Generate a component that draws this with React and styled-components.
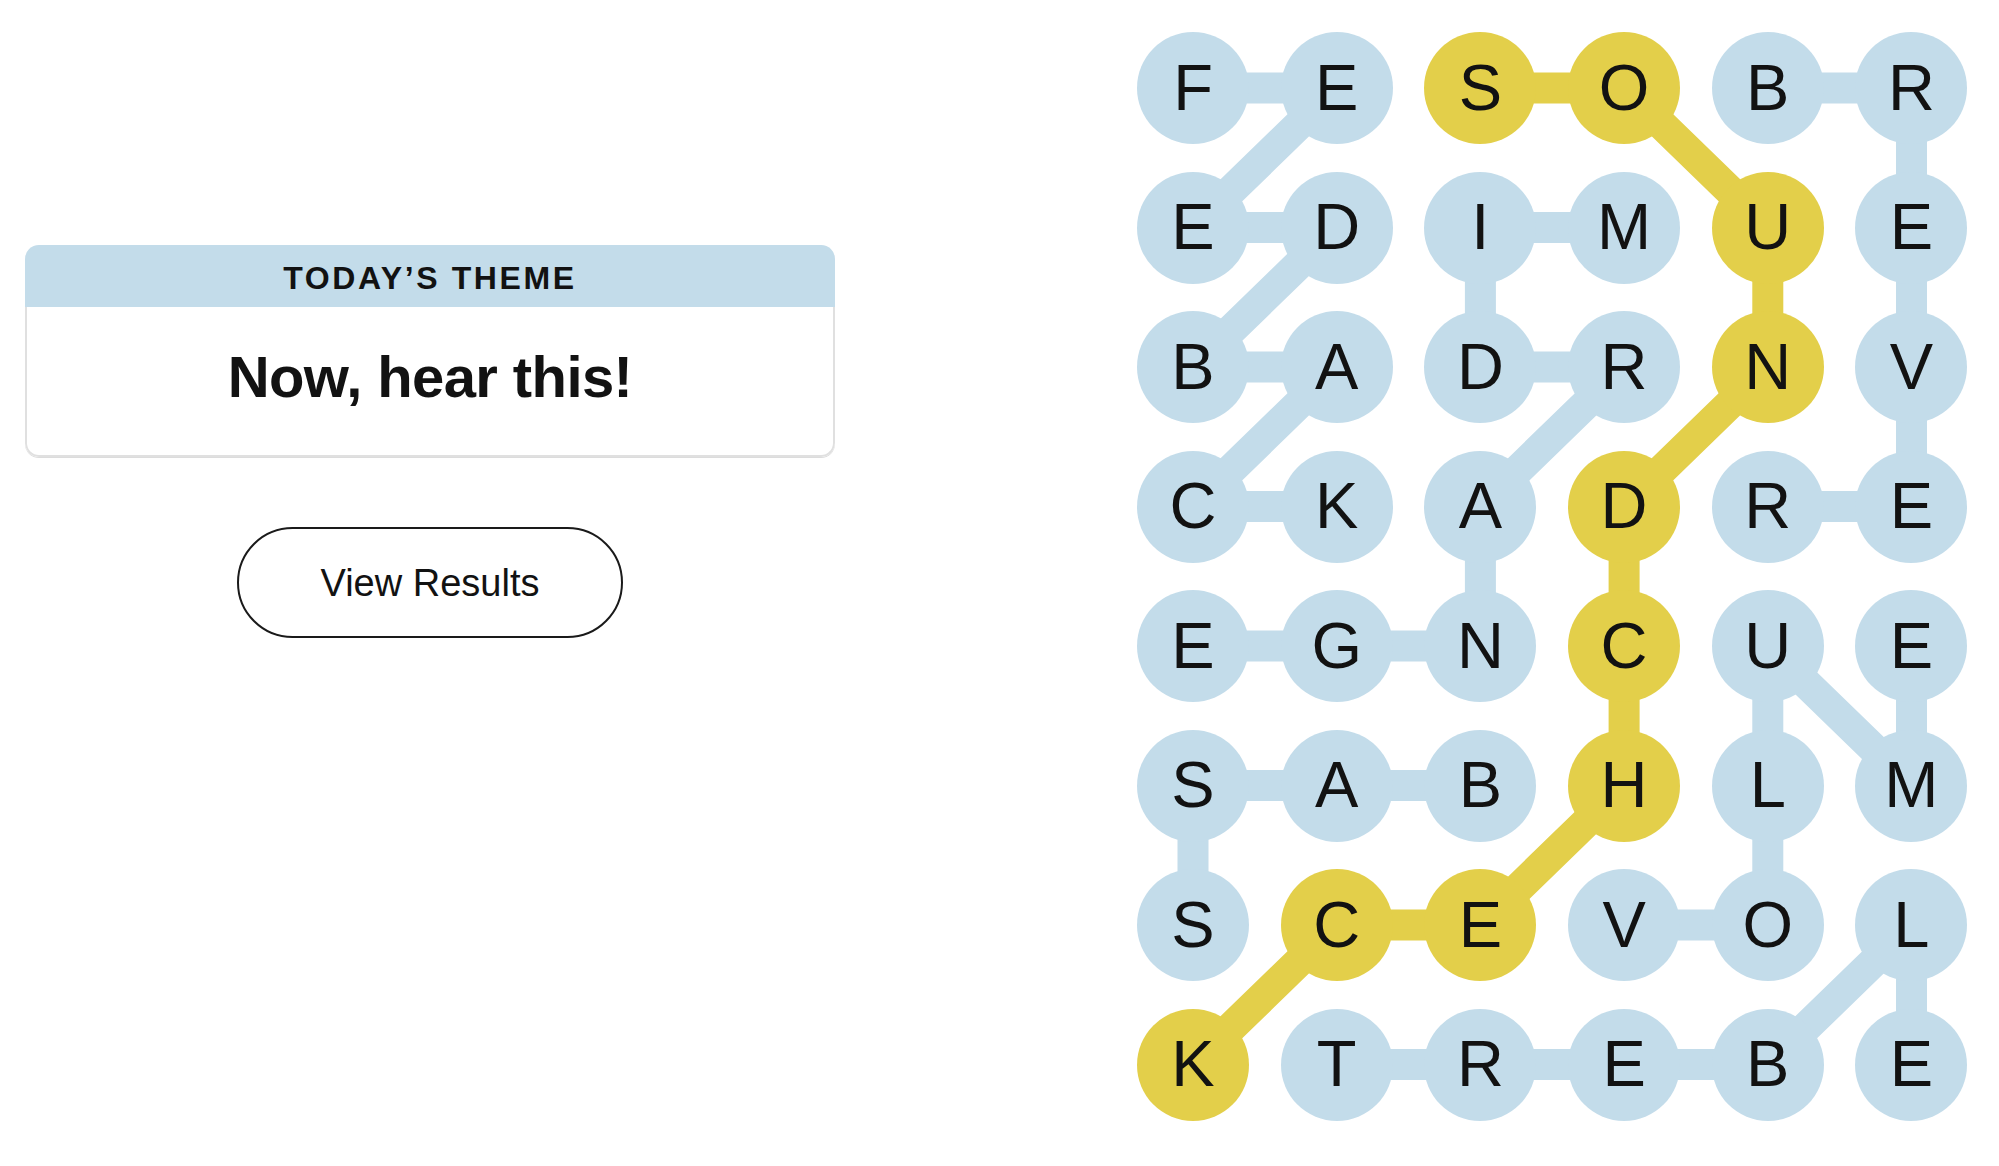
import React from 'react'
import styled, { createGlobalStyle } from 'styled-components'

const ROWS = ['FESOBR', 'EDIMUE', 'BADRNV', 'CKADRE', 'EGNCUE', 'SABHLM', 'SCEVOL', 'KTREBE']

const CELL = 112
const GAP_X = 31.7
const GAP_Y = 27.5

const BLUE = '#c3dcea'
const YELLOW = '#e3cf4a'

// found words, each as a path of [row, col]
const WORDS = [
  [[0, 0], [0, 1], [1, 0], [1, 1], [2, 0], [2, 1], [3, 0], [3, 1]], // feedback
  [[3, 4], [3, 5], [2, 5], [1, 5], [0, 5], [0, 4]], // reverb
  [[1, 3], [1, 2], [2, 2], [2, 3], [3, 2], [4, 2], [4, 1], [4, 0]], // midrange
  [[6, 3], [6, 4], [5, 4], [4, 4], [5, 5], [4, 5]], // volume
  [[5, 2], [5, 1], [5, 0], [6, 0]], // bass
  [[7, 1], [7, 2], [7, 3], [7, 4], [6, 5], [7, 5]], // treble
]

const SPANGRAM = [[0, 2], [0, 3], [1, 4], [2, 4], [3, 3], [4, 3], [5, 3], [6, 2], [6, 1], [7, 0]]

const isSpangram = (r, c) => SPANGRAM.some(([a, b]) => a === r && b === c)

const cx = (c) => CELL / 2 + c * (CELL + GAP_X)
const cy = (r) => CELL / 2 + r * (CELL + GAP_Y)
const toPoints = (path) => path.map(([r, c]) => `${cx(c)},${cy(r)}`).join(' ')

const GRID_W = 6 * CELL + 5 * GAP_X
const GRID_H = 8 * CELL + 7 * GAP_Y

const App = () => {
  return (
    <>
      <GlobalStyle />
      <Page>
        <SidePanel>
          <ThemeCard>
            <ThemeHeader>TODAY’S THEME</ThemeHeader>
            <ThemeBody>
              <ThemeTitle>Now, hear this!</ThemeTitle>
            </ThemeBody>
          </ThemeCard>
          <ResultsBTN>View Results</ResultsBTN>
        </SidePanel>

        <Board>
          <Lines width={GRID_W} height={GRID_H} viewBox={`0 0 ${GRID_W} ${GRID_H}`}>
            {WORDS.map((w, i) => (
              <polyline key={i} points={toPoints(w)} fill="none" stroke={BLUE} strokeWidth="31" strokeLinejoin="round" />
            ))}
            <polyline points={toPoints(SPANGRAM)} fill="none" stroke={YELLOW} strokeWidth="31" strokeLinejoin="round" />
          </Lines>
          {ROWS.map((row, r) =>
            row.split('').map((ch, c) => (
              <Letter key={`${r}-${c}`} $gold={isSpangram(r, c)}>{ch}</Letter>
            ))
          )}
        </Board>
      </Page>
    </>
  )
}

const GlobalStyle = createGlobalStyle`
  html, body {
    margin: 0;
    padding: 0;
    background: #fff;
  }
  body {
    font-family: "Liberation Sans", Arial, sans-serif;
    color: #121212;
  }
`

const Page = styled.div`
  display: flex;
  align-items: flex-start;
  padding: 32px 0 0 25px;
  width: 1999px;
  height: 1166px;
  box-sizing: border-box;
`

const SidePanel = styled.div`
  width: 810px;
  margin-top: 213px;
  display: flex;
  flex-direction: column;
  align-items: center;
  gap: 70px;
`

const ThemeCard = styled.div`
  width: 100%;
  border-radius: 14px;
  overflow: hidden;
  box-shadow: 0 1px 0 #dcdcdc;
`

const ThemeHeader = styled.div`
  height: 62px;
  box-sizing: border-box;
  padding-top: 5px;
  background: ${BLUE};
  display: flex;
  align-items: center;
  justify-content: center;
  font-size: 32px;
  font-weight: 700;
  letter-spacing: 2.6px;
`

const ThemeBody = styled.div`
  height: 150px;
  box-sizing: border-box;
  border: 2px solid #e0e0e0;
  border-top: none;
  border-radius: 0 0 14px 14px;
  display: flex;
  align-items: center;
  justify-content: center;
  padding-bottom: 8px;
`

const ThemeTitle = styled.h1`
  margin: 0;
  font-size: 58px;
  font-weight: 700;
  letter-spacing: -0.6px;
  line-height: 1;
`

const ResultsBTN = styled.button`
  width: 386px;
  height: 111px;
  border: 2px solid #1a1a1a;
  border-radius: 56px;
  background: #fff;
  color: #121212;
  font-family: "Liberation Sans", Arial, sans-serif;
  font-size: 38px;
  padding-top: 2px;
  cursor: pointer;
`

const Board = styled.div`
  position: relative;
  margin-left: 302px;
  display: grid;
  grid-template-columns: repeat(6, ${CELL}px);
  grid-auto-rows: ${CELL}px;
  column-gap: ${GAP_X}px;
  row-gap: ${GAP_Y}px;
`

const Lines = styled.svg`
  position: absolute;
  left: 0;
  top: 0;
  z-index: 0;
`

const Letter = styled.div`
  position: relative;
  z-index: 1;
  width: ${CELL}px;
  height: ${CELL}px;
  border-radius: 50%;
  background: ${props => (props.$gold ? YELLOW : BLUE)};
  display: flex;
  align-items: center;
  justify-content: center;
  font-size: 65px;
  line-height: 1;
  padding-bottom: 2px;
  box-sizing: border-box;
  color: #121212;
`

export default App
